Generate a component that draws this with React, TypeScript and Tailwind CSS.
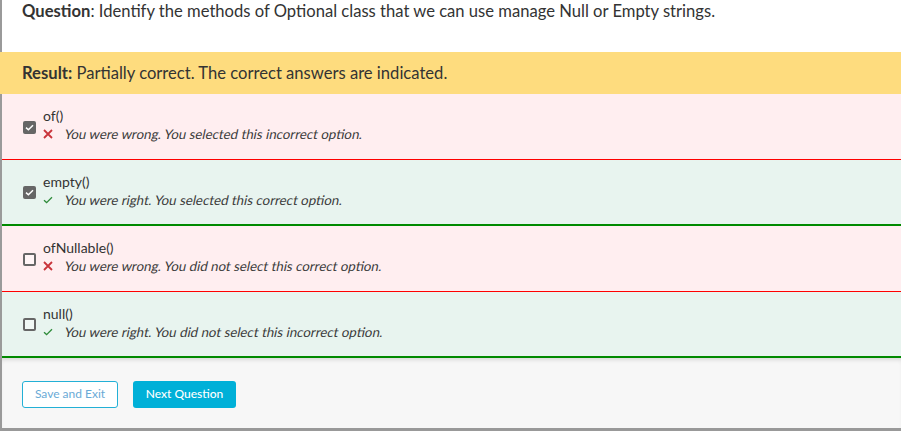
import React from "react";

type Opt = {
  label: string;
  checked: boolean;
  right: boolean;
  msg: string;
};

const opts: Opt[] = [
  { label: "of()", checked: true, right: false, msg: "You were wrong. You selected this incorrect option." },
  { label: "empty()", checked: true, right: true, msg: "You were right. You selected this correct option." },
  { label: "ofNullable()", checked: false, right: false, msg: "You were wrong. You did not select this correct option." },
  { label: "null()", checked: false, right: true, msg: "You were right. You did not select this incorrect option." },
];

function Box({ checked }: { checked: boolean }) {
  if (checked) {
    return (
      <div className="w-[13px] h-[13px] rounded-[2px] bg-[#666] flex items-center justify-center">
        <svg width="9" height="7" viewBox="0 0 9 7" fill="none">
          <path d="M1 3.6 L3.4 5.8 L8 1.2" stroke="#fff" strokeWidth="1.5" />
        </svg>
      </div>
    );
  }
  return <div className="w-[13px] h-[13px] rounded-[2px] border-2 border-[#666] bg-white/40" />;
}

function Mark({ right }: { right: boolean }) {
  if (right) {
    return (
      <svg width="10" height="8" viewBox="0 0 10 8" fill="none">
        <path d="M1 4.2 L3.6 6.6 L9 1.2" stroke="#2e8b3a" strokeWidth="1.3" />
      </svg>
    );
  }
  return (
    <svg width="10" height="10" viewBox="0 0 10 10" fill="none">
      <path d="M1 1 L9 9 M9 1 L1 9" stroke="#c9333a" strokeWidth="1.8" />
    </svg>
  );
}

export default function App() {
  return (
    <div
      className="w-[901px] h-[431px] bg-white flex flex-col border-l-2 border-[#9a9a9a] text-[#333]"
      style={{ fontFamily: "Lato, 'Noto Sans', sans-serif" }}
    >
      <div className="h-[52px] pl-[20px] pt-[1px] text-[16.6px] leading-[20px] whitespace-nowrap">
        <span className="font-bold">Question</span>: Identify the methods of Optional class that we can use manage Null or Empty strings.
      </div>
      <div className="h-[42px] -ml-[2px] pl-[22px] bg-[#fedc7e] flex items-center text-[16.6px]">
        <span className="font-bold">Result:</span>
        <span>&nbsp;Partially correct. The correct answers are indicated.</span>
      </div>
      {opts.map((o, i) => (
        <div
          key={i}
          className={
            o.right
              ? "h-[66px] bg-[#e8f4ef] border-b-2 border-[#008a00] flex items-center pl-[21px]"
              : "h-[66px] bg-[#ffeef0] border-b-[1.5px] border-[#ff0000] flex items-center pl-[21px]"
          }
        >
          <div className="mt-[1px]">
            <Box checked={o.checked} />
          </div>
          <div className="ml-[7px] flex flex-col">
            <div className="text-[14px] leading-[18px] -mt-[4px]">{o.label}</div>
            <div className="flex items-center mt-[1px]">
              <div className="w-[20px] flex items-center">
                <Mark right={o.right} />
              </div>
              <span className="inline-block -skew-x-12 origin-bottom-left text-[13.3px] leading-[16px] text-[#3a3a3a] whitespace-nowrap">
                {o.msg}
              </span>
            </div>
          </div>
        </div>
      ))}
      <div className="flex-1 bg-[#f7f7f7] border-b-[3px] border-[#999] shadow-[inset_0_4px_4px_-2px_rgba(0,0,0,0.12)] flex items-center pl-[20px] gap-[15px] pt-[2px]">
        <button className="w-[96px] h-[27px] bg-white border border-[#23b0d6] rounded-[3px] text-[12px] text-[#6aaad6]">
          Save and Exit
        </button>
        <button className="w-[103px] h-[27px] bg-[#00b0d8] rounded-[3px] text-[12px] font-medium text-white">
          Next Question
        </button>
      </div>
    </div>
  );
}
